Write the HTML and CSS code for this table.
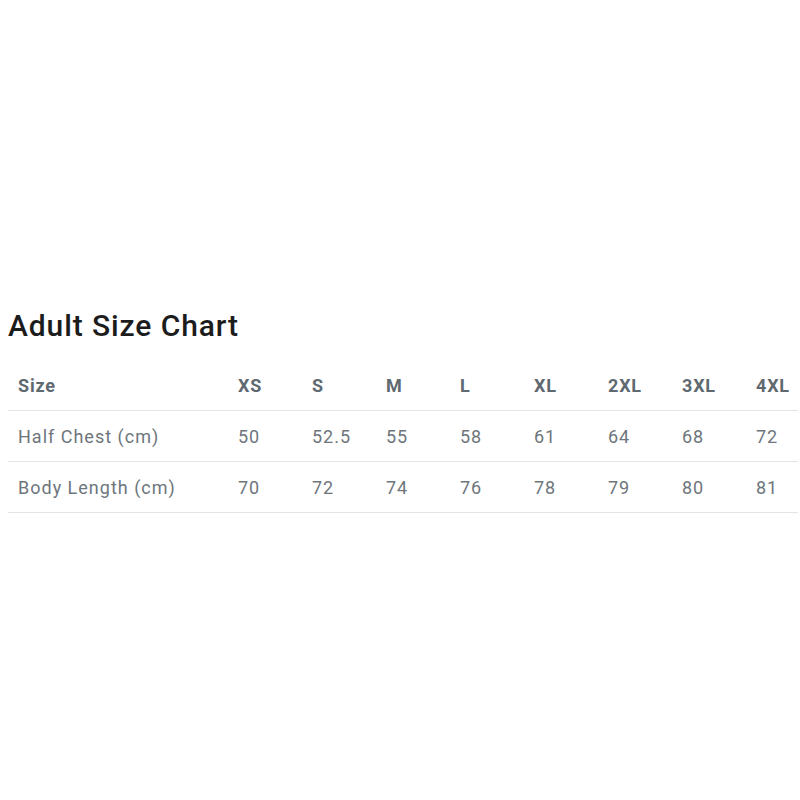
FILE: index.html
```html
<!DOCTYPE html>
<html>
<head>
<meta charset="utf-8">
<link rel="stylesheet" href="styles.css">
</head>
<body>
<main class="page">
  <h2 class="title">Adult Size Chart</h2>
  <div class="chart">
    <div class="row head">
      <span>Size</span><span>XS</span><span>S</span><span>M</span><span>L</span><span>XL</span><span>2XL</span><span>3XL</span><span>4XL</span>
    </div>
    <div class="row">
      <span>Half Chest (cm)</span><span>50</span><span>52.5</span><span>55</span><span>58</span><span>61</span><span>64</span><span>68</span><span>72</span>
    </div>
    <div class="row">
      <span>Body Length (cm)</span><span>70</span><span>72</span><span>74</span><span>76</span><span>78</span><span>79</span><span>80</span><span>81</span>
    </div>
  </div>
</main>
</body>
</html>
```
FILE: styles.css
```css
html, body {
  margin: 0;
  background: #fff;
}
body {
  font-family: Roboto, "Liberation Sans", sans-serif;
}
.page {
  padding: 306px 0 0 8px;
}
.title {
  margin: 0;
  font-size: 30px;
  font-weight: 500;
  letter-spacing: 0.9px;
  color: #1c1c1c;
  line-height: 40px;
}
.chart {
  margin-top: 14px;
  width: 790px;
}
.row {
  display: grid;
  grid-template-columns: 220px repeat(7, 74px) 1fr;
  height: 51px;
  box-sizing: border-box;
  align-items: center;
  border-bottom: 1px solid #e4e4e4;
  font-size: 18px;
  letter-spacing: 1px;
  color: #6e767c;
}
.row span {
  padding-left: 10px;
  white-space: nowrap;
}
.row.head {
  font-weight: 700;
  font-size: 18px;
  letter-spacing: 0.8px;
  color: #5f6970;
}
```
